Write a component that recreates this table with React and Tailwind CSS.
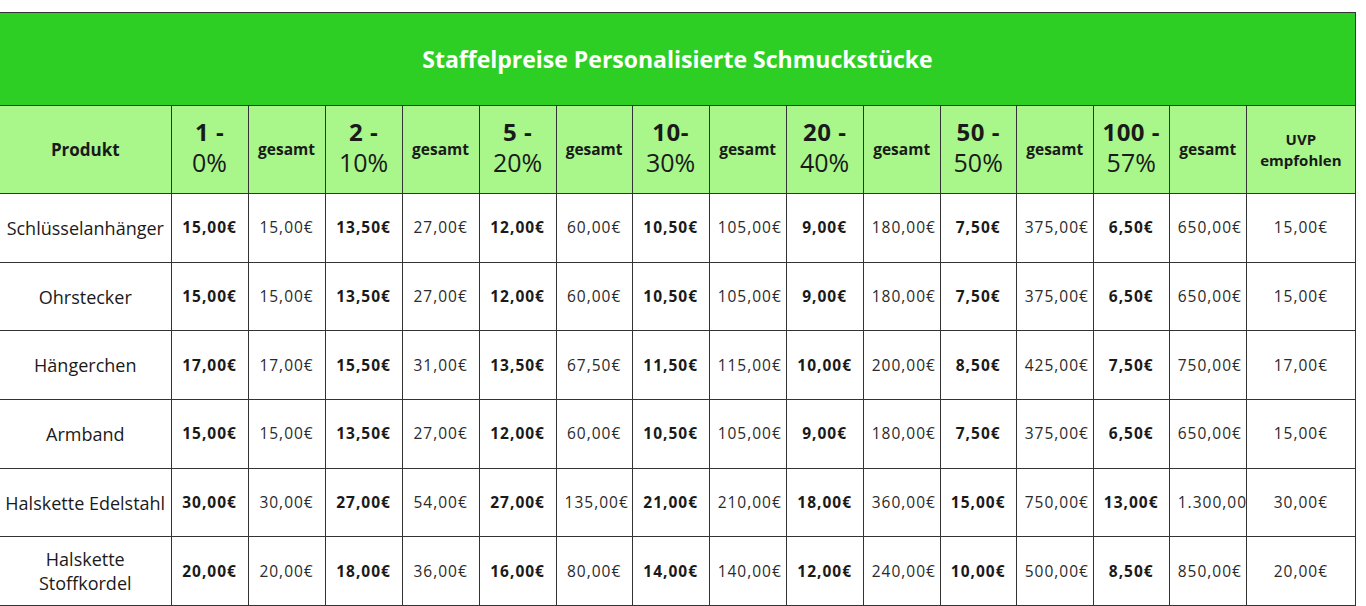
const tiers = [
  { qty: '1 -', pct: '0%' },
  { qty: '2 -', pct: '10%' },
  { qty: '5 -', pct: '20%' },
  { qty: '10-', pct: '30%' },
  { qty: '20 -', pct: '40%' },
  { qty: '50 -', pct: '50%' },
  { qty: '100 -', pct: '57%' },
];

const rows = [
  { name: 'Schlüsselanhänger', cells: ['15,00€', '15,00€', '13,50€', '27,00€', '12,00€', '60,00€', '10,50€', '105,00€', '9,00€', '180,00€', '7,50€', '375,00€', '6,50€', '650,00€'], uvp: '15,00€' },
  { name: 'Ohrstecker', cells: ['15,00€', '15,00€', '13,50€', '27,00€', '12,00€', '60,00€', '10,50€', '105,00€', '9,00€', '180,00€', '7,50€', '375,00€', '6,50€', '650,00€'], uvp: '15,00€' },
  { name: 'Hängerchen', cells: ['17,00€', '17,00€', '15,50€', '31,00€', '13,50€', '67,50€', '11,50€', '115,00€', '10,00€', '200,00€', '8,50€', '425,00€', '7,50€', '750,00€'], uvp: '17,00€' },
  { name: 'Armband', cells: ['15,00€', '15,00€', '13,50€', '27,00€', '12,00€', '60,00€', '10,50€', '105,00€', '9,00€', '180,00€', '7,50€', '375,00€', '6,50€', '650,00€'], uvp: '15,00€' },
  { name: 'Halskette Edelstahl', cells: ['30,00€', '30,00€', '27,00€', '54,00€', '27,00€', '135,00€', '21,00€', '210,00€', '18,00€', '360,00€', '15,00€', '750,00€', '13,00€', '1.300,00€'], uvp: '30,00€' },
  { name: 'Halskette Stoffkordel', cells: ['20,00€', '20,00€', '18,00€', '36,00€', '16,00€', '80,00€', '14,00€', '140,00€', '12,00€', '240,00€', '10,00€', '500,00€', '8,50€', '850,00€'], uvp: '20,00€' },
];

const widths = [171, 77, 77, 77, 77, 77, 76, 77, 77, 77, 77, 76, 77, 76, 77, 109];

const edge = 'border-[1.5px] border-[#333] text-center align-middle';
const cell = `${edge} py-0 px-2 overflow-hidden whitespace-nowrap`;

export default function App() {
  return (
    <div className="bg-white w-[1366px] h-[606px] overflow-hidden pt-[12px] font-['Open_Sans',sans-serif] text-[#1a1a1a]">
      <table className="table-fixed border-collapse w-[1356px]">
        <colgroup>
          {widths.map((w, i) => (
            <col key={i} style={{ width: w }} />
          ))}
        </colgroup>
        <thead>
          <tr className="h-[93px]">
            <th colSpan={16} className={`${edge} border-l-0 bg-[#2ecf24] text-white text-[23px] font-bold`}>
              Staffelpreise Personalisierte Schmuckstücke
            </th>
          </tr>
          <tr className="h-[88px] bg-[#a9f68b]">
            <th className={`${edge} border-l-0 text-[17px] font-bold`}>Produkt</th>
            {tiers.map((t) => (
              <>
                <th key={t.pct} className={`${edge} p-0 font-normal leading-[30px] pb-[5px] whitespace-nowrap`}>
                  <div className="text-[24px] font-bold tracking-[0.5px]">{t.qty}</div>
                  <div className="text-[25px] font-normal">{t.pct}</div>
                </th>
                <th key={t.pct + 'g'} className={`${edge} p-0 text-[15.5px] font-bold`}>gesamt</th>
              </>
            ))}
            <th className={`${edge} p-0 text-[15px] font-bold leading-[21px]`}>
              UVP
              <br />
              empfohlen
            </th>
          </tr>
        </thead>
        <tbody>
          {rows.map((r) => (
            <tr key={r.name} className="h-[68.7px]">
              <td className={`${edge} border-l-0 text-[18px] leading-[24px] px-0.5`}>{r.name}</td>
              {r.cells.map((c, i) => (
                <td
                  key={i}
                  className={`${cell} text-[15.5px] tracking-[1px] ${i % 2 === 0 ? 'font-bold' : 'font-normal text-[#2a2a2a]'}`}
                >
                  {c}
                </td>
              ))}
              <td className={`${cell} text-[15.5px] tracking-[1px] text-[#2a2a2a]`}>{r.uvp}</td>
            </tr>
          ))}
        </tbody>
      </table>
    </div>
  );
}
